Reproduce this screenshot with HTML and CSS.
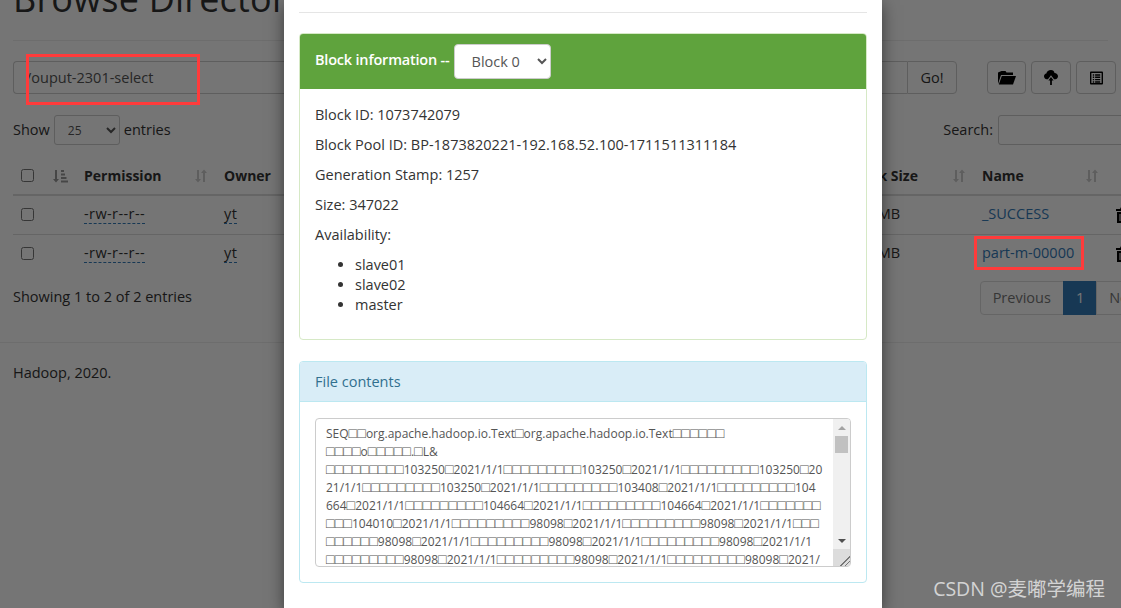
FILE: index.html
```html
<!DOCTYPE html>
<html lang="en">
<head>
<meta charset="utf-8">
<title>Browse Directory</title>
<link rel="stylesheet" href="styles.css">
</head>
<body>
<svg class="defs" width="0" height="0" aria-hidden="true">
  <defs>
    <symbol id="sort" viewBox="0 0 14 14"><path d="M3 1h2v9h2l-3 3.500L1 10h2zM10 0.500l3 3.500h-2v9H9V4H7z"/></symbol>
    <symbol id="sort-asc" viewBox="0 0 16 14"><path d="M3 1h2v9h2l-3 3.500L1 10h2z"/><path d="M9 1h3v2H9zM9 4.500h4v2H9zM9 8h5.500v2H9zM9 11.500h7v2H9z"/></symbol>
    <symbol id="trash" viewBox="0 0 14 16"><path d="M5 0h4l1 2h4v2H0V2h4zM1 5h12v11H1zM3.500 7v7h1V7zM6.500 7v7h1V7zM9.500 7v7h1V7z" fill-rule="evenodd"/></symbol>
  </defs>
</svg>
<main class="page">
  <h1 class="title">Browse Directory</h1>
  <hr class="rule">
  <div class="toolbar">
    <div class="path-group">
      <input class="path-input" type="text" value="/ouput-2301-select">
      <button class="go-btn" type="button">Go!</button>
    </div>
    <div class="tools">
      <button class="tool-btn" type="button" aria-label="Create directory">
        <svg width="18" height="14" viewBox="0 0 18 14"><path d="M3.500 0h4l1 1.500H15V4H3L0 13V1.500z"/><path d="M3.800 5H18l-3 8.500H.8z"/></svg>
      </button>
      <button class="tool-btn" type="button" aria-label="Upload">
        <svg width="14" height="15" viewBox="0 0 16 17"><path d="M8 0c2.200 0 3.700 1.500 4 3.400 2.200.2 4 1.700 4 3.800 0 1.800-1.300 3.300-3 3.300h-1.500L8 6 4.500 10.500H3c-1.700 0-3-1.500-3-3.300 0-1.600 1.100-2.900 2.700-3.200C3.200 1.700 5.200 0 8 0z"/><path d="M8 8l3 4H9v5H7v-5H5z"/></svg>
      </button>
      <button class="tool-btn" type="button" aria-label="Cut and paste">
        <svg width="13" height="14" viewBox="0 0 14 14"><path fill-rule="evenodd" d="M1 0h12a1 1 0 011 1v12a1 1 0 01-1 1H1a1 1 0 01-1-1V1a1 1 0 011-1zm.5 1.500v11h11v-11zM3 3h1.500v1.500H3zM5.500 3H11v1.500H5.500zM3 5.500h1.500V7H3zM5.500 5.500H11V7H5.500zM3 8h1.500v1.500H3zM5.500 8H11v1.500H5.500zM3 10.500h1.500V12H3zM5.500 10.500H11V12H5.500z"/></svg>
      </button>
    </div>
  </div>
  <div class="controls">
    <label class="length">Show
      <select class="length-select"><option>25</option></select>
      entries</label>
    <label class="search">Search:
      <input class="search-input" type="text">
    </label>
  </div>
  <table class="files">
    <colgroup>
      <col class="c-check"><col class="c-icon"><col class="c-perm"><col class="c-owner"><col class="c-group"><col class="c-size"><col class="c-date"><col class="c-rep"><col class="c-block"><col class="c-name"><col class="c-del">
    </colgroup>
    <thead>
      <tr>
        <th><input class="check" type="checkbox"></th>
        <th><svg class="sort-icon active" width="16" height="14"><use href="#sort-asc"/></svg></th>
        <th><span class="th-in">Permission <svg class="sort-icon" width="14" height="14"><use href="#sort"/></svg></span></th>
        <th><span class="th-in">Owner <svg class="sort-icon" width="14" height="14"><use href="#sort"/></svg></span></th>
        <th><span class="th-in">Group <svg class="sort-icon" width="14" height="14"><use href="#sort"/></svg></span></th>
        <th><span class="th-in">Size <svg class="sort-icon" width="14" height="14"><use href="#sort"/></svg></span></th>
        <th><span class="th-in">Last Modified <svg class="sort-icon" width="14" height="14"><use href="#sort"/></svg></span></th>
        <th><span class="th-in">Replication <svg class="sort-icon" width="14" height="14"><use href="#sort"/></svg></span></th>
        <th><span class="th-in">Block Size <svg class="sort-icon" width="14" height="14"><use href="#sort"/></svg></span></th>
        <th><span class="th-in">Name <svg class="sort-icon" width="14" height="14"><use href="#sort"/></svg></span></th>
        <th></th>
      </tr>
    </thead>
    <tbody>
      <tr>
        <td><input class="check" type="checkbox"></td><td></td>
        <td><span class="dotted">-rw-r--r--</span></td><td><span class="dotted">yt</span></td>
        <td>supergroup</td><td>0 B</td><td>Mar 27 11:02</td><td>3</td><td>128 MB</td>
        <td><a class="link" href="#">_SUCCESS</a></td>
        <td><svg class="trash" width="14" height="16"><use href="#trash"/></svg></td>
      </tr>
      <tr>
        <td><input class="check" type="checkbox"></td><td></td>
        <td><span class="dotted">-rw-r--r--</span></td><td><span class="dotted">yt</span></td>
        <td>supergroup</td><td>338.89 KB</td><td>Mar 27 11:02</td><td>3</td><td>128 MB</td>
        <td><a class="link" href="#">part-m-00000</a></td>
        <td><svg class="trash" width="14" height="16"><use href="#trash"/></svg></td>
      </tr>
    </tbody>
  </table>
  <div class="table-foot">
    <span class="info">Showing 1 to 2 of 2 entries</span>
    <nav class="pager">
      <a class="pg pg-prev" href="#">Previous</a><a class="pg pg-on" href="#">1</a><a class="pg" href="#">Next</a>
    </nav>
  </div>
  <hr class="rule foot-rule">
  <footer class="credit">Hadoop, 2020.</footer>
</main>

<div class="backdrop"></div>
<div class="mark mark-path"></div>
<div class="mark mark-file"></div>

<section class="modal">
  <hr class="modal-rule">
  <div class="panel panel-ok">
    <div class="panel-head head-ok">
      <span class="head-title">Block information --</span>
      <select class="block-select"><option>Block 0</option></select>
    </div>
    <div class="panel-body">
      <p>Block ID: 1073742079</p>
      <p>Block Pool ID: BP-1873820221-192.168.52.100-1711511311184</p>
      <p>Generation Stamp: 1257</p>
      <p>Size: 347022</p>
      <p>Availability:</p>
      <ul class="nodes"><li>slave01</li><li>slave02</li><li>master</li></ul>
    </div>
  </div>
  <div class="panel panel-info">
    <div class="panel-head head-info">File contents</div>
    <div class="panel-body">
      <div class="area">
        <div class="contents">SEQ<b>□□</b>org.apache.hadoop.io.Text<b>□</b>org.apache.hadoop.io.Text<b>□□□□□□</b>
<b>□□□□</b>o<b>□□□□□</b>.<b>□</b>L&amp;
<b>□□□□□□□□□</b>103250<b>□</b>2021/1/1<b>□□□□□□□□□</b>103250<b>□</b>2021/1/1<b>□□□□□□□□□</b>103250<b>□</b>20
21/1/1<b>□□□□□□□□□</b>103250<b>□</b>2021/1/1<b>□□□□□□□□□</b>103408<b>□</b>2021/1/1<b>□□□□□□□□□</b>104
664<b>□</b>2021/1/1<b>□□□□□□□□□</b>104664<b>□</b>2021/1/1<b>□□□□□□□□□</b>104664<b>□</b>2021/1/1<b>□□□□□□□</b>
<b>□□□</b>104010<b>□</b>2021/1/1<b>□□□□□□□□□</b>98098<b>□</b>2021/1/1<b>□□□□□□□□□</b>98098<b>□</b>2021/1/1<b>□□□</b>
<b>□□□□□□</b>98098<b>□</b>2021/1/1<b>□□□□□□□□□</b>98098<b>□</b>2021/1/1<b>□□□□□□□□□</b>98098<b>□</b>2021/1/1
<b>□□□□□□□□□</b>98098<b>□</b>2021/1/1<b>□□□□□□□□□</b>98098<b>□</b>2021/1/1<b>□□□□□□□□□</b>98098<b>□</b>2021/</div>
        <div class="bar" aria-hidden="true">
          <span class="bar-btn"><span class="arrow-up"></span></span>
          <span class="bar-thumb"></span>
          <span class="bar-track"></span>
          <span class="bar-btn"><span class="arrow-down"></span></span>
          <span class="bar-corner"></span>
        </div>
      </div>
    </div>
  </div>
</section>

<div class="watermark">CSDN @麦嘟学编程</div>
</body>
</html>
```

FILE: styles.css
```css
* { box-sizing: border-box; }
html, body {
  margin: 0;
  height: 100%;
  overflow: hidden;
  background: #fff;
}
body {
  position: relative;
  font-family: "Open Sans", "Noto Sans", "Noto Sans CJK SC", sans-serif;
  font-size: 14.5px;
  line-height: 20px;
  color: #333;
}
.defs { display: block; height: 0; }

/* Underlying page */
.page {
  width: 1190px;
  padding: 0 0 0 13px;
  margin-top: -34px;
}
.title {
  margin: 0;
  height: 74px;
  font-size: 36px;
  font-weight: 400;
  line-height: 66px;
  letter-spacing: 0.2px;
}
.rule {
  margin: 0;
  width: 1095px;
  border: 0;
  border-top: 1px solid #eee;
}
.toolbar {
  display: flex;
  width: 1103px;
  margin-top: 20px;
  height: 33px;
}
.path-group { display: flex; width: 946px; }
.path-input {
  flex: 1;
  min-width: 0;
  height: 33px;
  padding: 0 12px;
  font: inherit;
  color: #555;
  border: 1px solid #ccc;
  border-right: 0;
  border-radius: 4px 0 0 4px;
  background: #fff;
}
.go-btn {
  width: 50px;
  height: 33px;
  font: inherit;
  color: #333;
  background: #fff;
  border: 1px solid #ccc;
  border-radius: 0 4px 4px 0;
}
.tools { display: flex; gap: 5px; margin-left: 30px; }
.tool-btn {
  display: flex;
  align-items: center;
  justify-content: center;
  width: 39px;
  height: 33px;
  padding: 0;
  background: #fff;
  border: 1px solid #ccc;
  border-radius: 4px;
}
.tool-btn svg { fill: #000; }
.tool-btn + .tool-btn { width: 40px; }

.controls {
  display: flex;
  justify-content: space-between;
  align-items: center;
  width: 1135px;
  margin-top: 21px;
  height: 30px;
}
.length, .search { display: flex; align-items: center; }
.length-select {
  width: 66px;
  height: 30px;
  margin: 0 4px 0 4px;
  padding: 0 0 0 9px;
  font: 12px "Open Sans", sans-serif;
  color: #555;
  background: #fff;
  border: 1px solid #ccc;
  border-radius: 3px;
}
.search-input {
  width: 150px;
  height: 30px;
  margin-left: 5px;
  border: 1px solid #ccc;
  border-radius: 3px;
  background: #fff;
}

.files {
  table-layout: fixed;
  width: 1166px;
  margin-top: 12px;
  border-collapse: collapse;
}
.c-check { width: 31px; }
.c-icon { width: 32px; }
.c-perm { width: 140px; }
.c-owner { width: 100px; }
.c-group { width: 130px; }
.c-size { width: 100px; }
.c-date { width: 170px; }
.c-rep { width: 125px; }
.c-block { width: 133px; }
.c-name { width: 133px; }
.c-del { width: 72px; }
.files th, .files td {
  padding: 8px;
  text-align: left;
  vertical-align: middle;
}
.files th {
  height: 38px;
  font-size: 14px;
  font-weight: 700;
  border-bottom: 2px solid #ddd;
}
.files td {
  height: 39px;
  padding: 7px 8px 9px;
  border-bottom: 1px solid #ddd;
}
.files td:first-child, .files td:last-child { padding: 8px; }
.files tbody tr:last-child td { border-bottom: 0; }
.th-in {
  display: flex;
  justify-content: space-between;
  align-items: center;
  white-space: nowrap;
}
.sort-icon { display: block; fill: #ccc; flex: none; }
.sort-icon.active { fill: #999; }
.check {
  display: block;
  width: 13px;
  height: 13px;
  margin: 0;
}
.dotted { border-bottom: 1px dashed #337ab7; letter-spacing: 0.4px; }
.link { color: #337ab7; text-decoration: none; }
.trash { display: block; fill: #000; margin-left: 1px; }
.table-foot {
  display: flex;
  justify-content: space-between;
  align-items: flex-start;
  width: 1141px;
  margin-top: 8px;
}
.info { padding-top: 6px; }
.pager { display: flex; }
.pg {
  padding: 6px 12px;
  height: 34px;
  color: #337ab7;
  text-decoration: none;
  background: #fff;
  border: 1px solid #ddd;
  margin-left: -1px;
}
.pg-prev {
  color: #777;
  border-radius: 4px 0 0 4px;
}
.pg-on {
  color: #fff;
  background: #337ab7;
  border-color: #337ab7;
}
.pg:last-child { color: #777; }
.foot-rule { margin-top: 27px; width: 1177px; margin-left: -13px; }
.credit { margin-top: 20px; }

/* Layers above the page */
.backdrop {
  position: absolute;
  inset: 0;
  background: rgba(0, 0, 0, 0.54);
}
.mark {
  position: absolute;
  border: 3px solid #ff3b3b;
}
.mark-path { left: 26px; top: 54px; width: 174px; height: 51px; }
.mark-file { left: 974px; top: 236px; width: 110px; height: 34px; }

.modal {
  position: absolute;
  left: 284px;
  top: 0;
  width: 598px;
  height: 608px;
  padding: 12px 15px 0;
  background: #fff;
  box-shadow: 0 5px 15px rgba(0, 0, 0, 0.5);
  overflow: hidden;
}
.modal-rule {
  margin: 0 0 20px;
  border: 0;
  border-top: 1px solid #e5e5e5;
}
.panel {
  margin-bottom: 21px;
  background: #fff;
  border: 1px solid;
  border-radius: 4px;
}
.panel-ok { border-color: #d6e9c6; }
.panel-info { border-color: #bce8f1; }
.panel-head {
  border-radius: 3px 3px 0 0;
}
.head-ok {
  display: flex;
  align-items: center;
  gap: 4px;
  height: 55px;
  padding: 0 15px;
  background: #5fa33d;
  color: #fff;
}
.head-title { font-weight: 600; letter-spacing: -0.2px; position: relative; top: -2px; }
.block-select {
  width: 97px;
  height: 35px;
  padding: 0 0 0 13px;
  font: inherit;
  color: #555;
  background: #fff;
  border: 1px solid #ccc;
  border-radius: 4px;
}
.head-info {
  height: 40px;
  padding: 10px 15px;
  color: #31708f;
  background: #d9edf7;
  border-bottom: 1px solid #bce8f1;
}
.panel-body { padding: 16px 15px 15px; }
.panel-body p { margin: 0 0 10px; }
.nodes { margin: 0 0 10px; padding-left: 40px; }
.panel-ok .panel-body { height: 250px; }
.area { position: relative; }
.contents {
  width: 100%;
  height: 149px;
  padding: 6px 27px 6px 10px;
  font-size: 12px;
  line-height: 18px;
  color: #555;
  background: #fff;
  border: 1px solid #ccc;
  border-radius: 4px;
  overflow: hidden;
  white-space: pre;
}
.contents b {
  font-family: "Liberation Sans", sans-serif;
  font-size: 14.3px;
  font-weight: 400;
  line-height: 1;
}
.bar {
  position: absolute;
  top: 1px;
  right: 1px;
  bottom: 1px;
  width: 17px;
  display: flex;
  flex-direction: column;
  background: #f0f0f0;
  border-radius: 0 3px 3px 0;
}
.bar-btn {
  flex: none;
  height: 17px;
  display: flex;
  align-items: center;
  justify-content: center;
}
.arrow-up, .arrow-down {
  width: 0;
  height: 0;
  border-left: 4px solid transparent;
  border-right: 4px solid transparent;
}
.arrow-up { border-bottom: 4px solid #a3a3a3; }
.arrow-down { border-top: 4px solid #505050; }
.bar-thumb { flex: none; height: 17px; margin: 0 2px; background: #c1c1c1; }
.bar-track { flex: 1; }
.bar-corner {
  flex: none;
  height: 17px;
  background: linear-gradient(135deg, #dcdcdc 0 70%, #777 70% 74%, #dcdcdc 74% 84%, #777 84% 88%, #dcdcdc 88%);
}

.watermark {
  position: absolute;
  right: 16px;
  top: 577px;
  font-size: 19.5px;
  line-height: 24px;
  color: rgba(255, 255, 255, 0.7);
}
```
